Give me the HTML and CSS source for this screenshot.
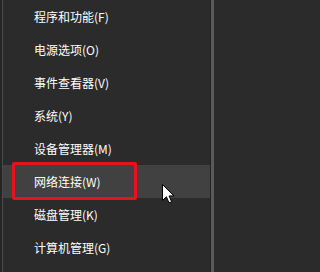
FILE: index.html
```html
<!DOCTYPE html>
<html lang="zh-CN">
<head>
<meta charset="utf-8">
<title>Win+X 菜单</title>
<link rel="stylesheet" href="styles.css">
</head>
<body>
<div class="screen">
  <div class="edge-l"></div>
  <ul class="menu">
    <li class="item">程序和功能(F)</li>
    <li class="item">电源选项(O)</li>
    <li class="item">事件查看器(V)</li>
    <li class="item">系统(Y)</li>
    <li class="item">设备管理器(M)</li>
    <li class="item hover">网络连接(W)</li>
    <li class="item">磁盘管理(K)</li>
    <li class="item">计算机管理(G)</li>
  </ul>
  <div class="edge-r"></div>
  <div class="mark"></div>
  <svg class="cursor" width="13" height="20" viewBox="0 0 13 20">
    <path d="M0.5 0.5 V16.5 L4.4 12.7 L7 18.8 L9.6 17.7 L7.1 11.9 H12 Z" fill="#fff" stroke="#000" stroke-width="1" stroke-linejoin="miter"/>
  </svg>
</div>
</body>
</html>
```

FILE: styles.css
```css
html, body {
  margin: 0;
  padding: 0;
  background: #2b2b2b;
}

.screen {
  position: relative;
  width: 214px;
  height: 272px;
  display: flex;
  background: #2b2b2b;
  overflow: hidden;
}

.edge-l {
  width: 2px;
  background: #262626;
  border-right: 1px solid #4a4a4a;
}

.menu {
  list-style: none;
  margin: 0;
  padding: 0;
  width: 207px;
  display: flex;
  flex-direction: column;
}

.item {
  height: 33px;
  display: flex;
  align-items: center;
  padding-left: 31px;
  font-family: "Noto Sans CJK SC", "Noto Sans", sans-serif;
  font-size: 12px;
  color: #ffffff;
  white-space: nowrap;
}

.item.hover {
  background: #414141;
}

.edge-r {
  flex: 1;
  background: #5a5a5a;
  border-left: 1px solid #222222;
}

.mark {
  position: absolute;
  left: 12px;
  top: 162px;
  width: 119px;
  height: 32px;
  border: 3px solid #e8121c;
  border-radius: 2px;
}

.cursor {
  position: absolute;
  left: 162px;
  top: 184px;
}
```
